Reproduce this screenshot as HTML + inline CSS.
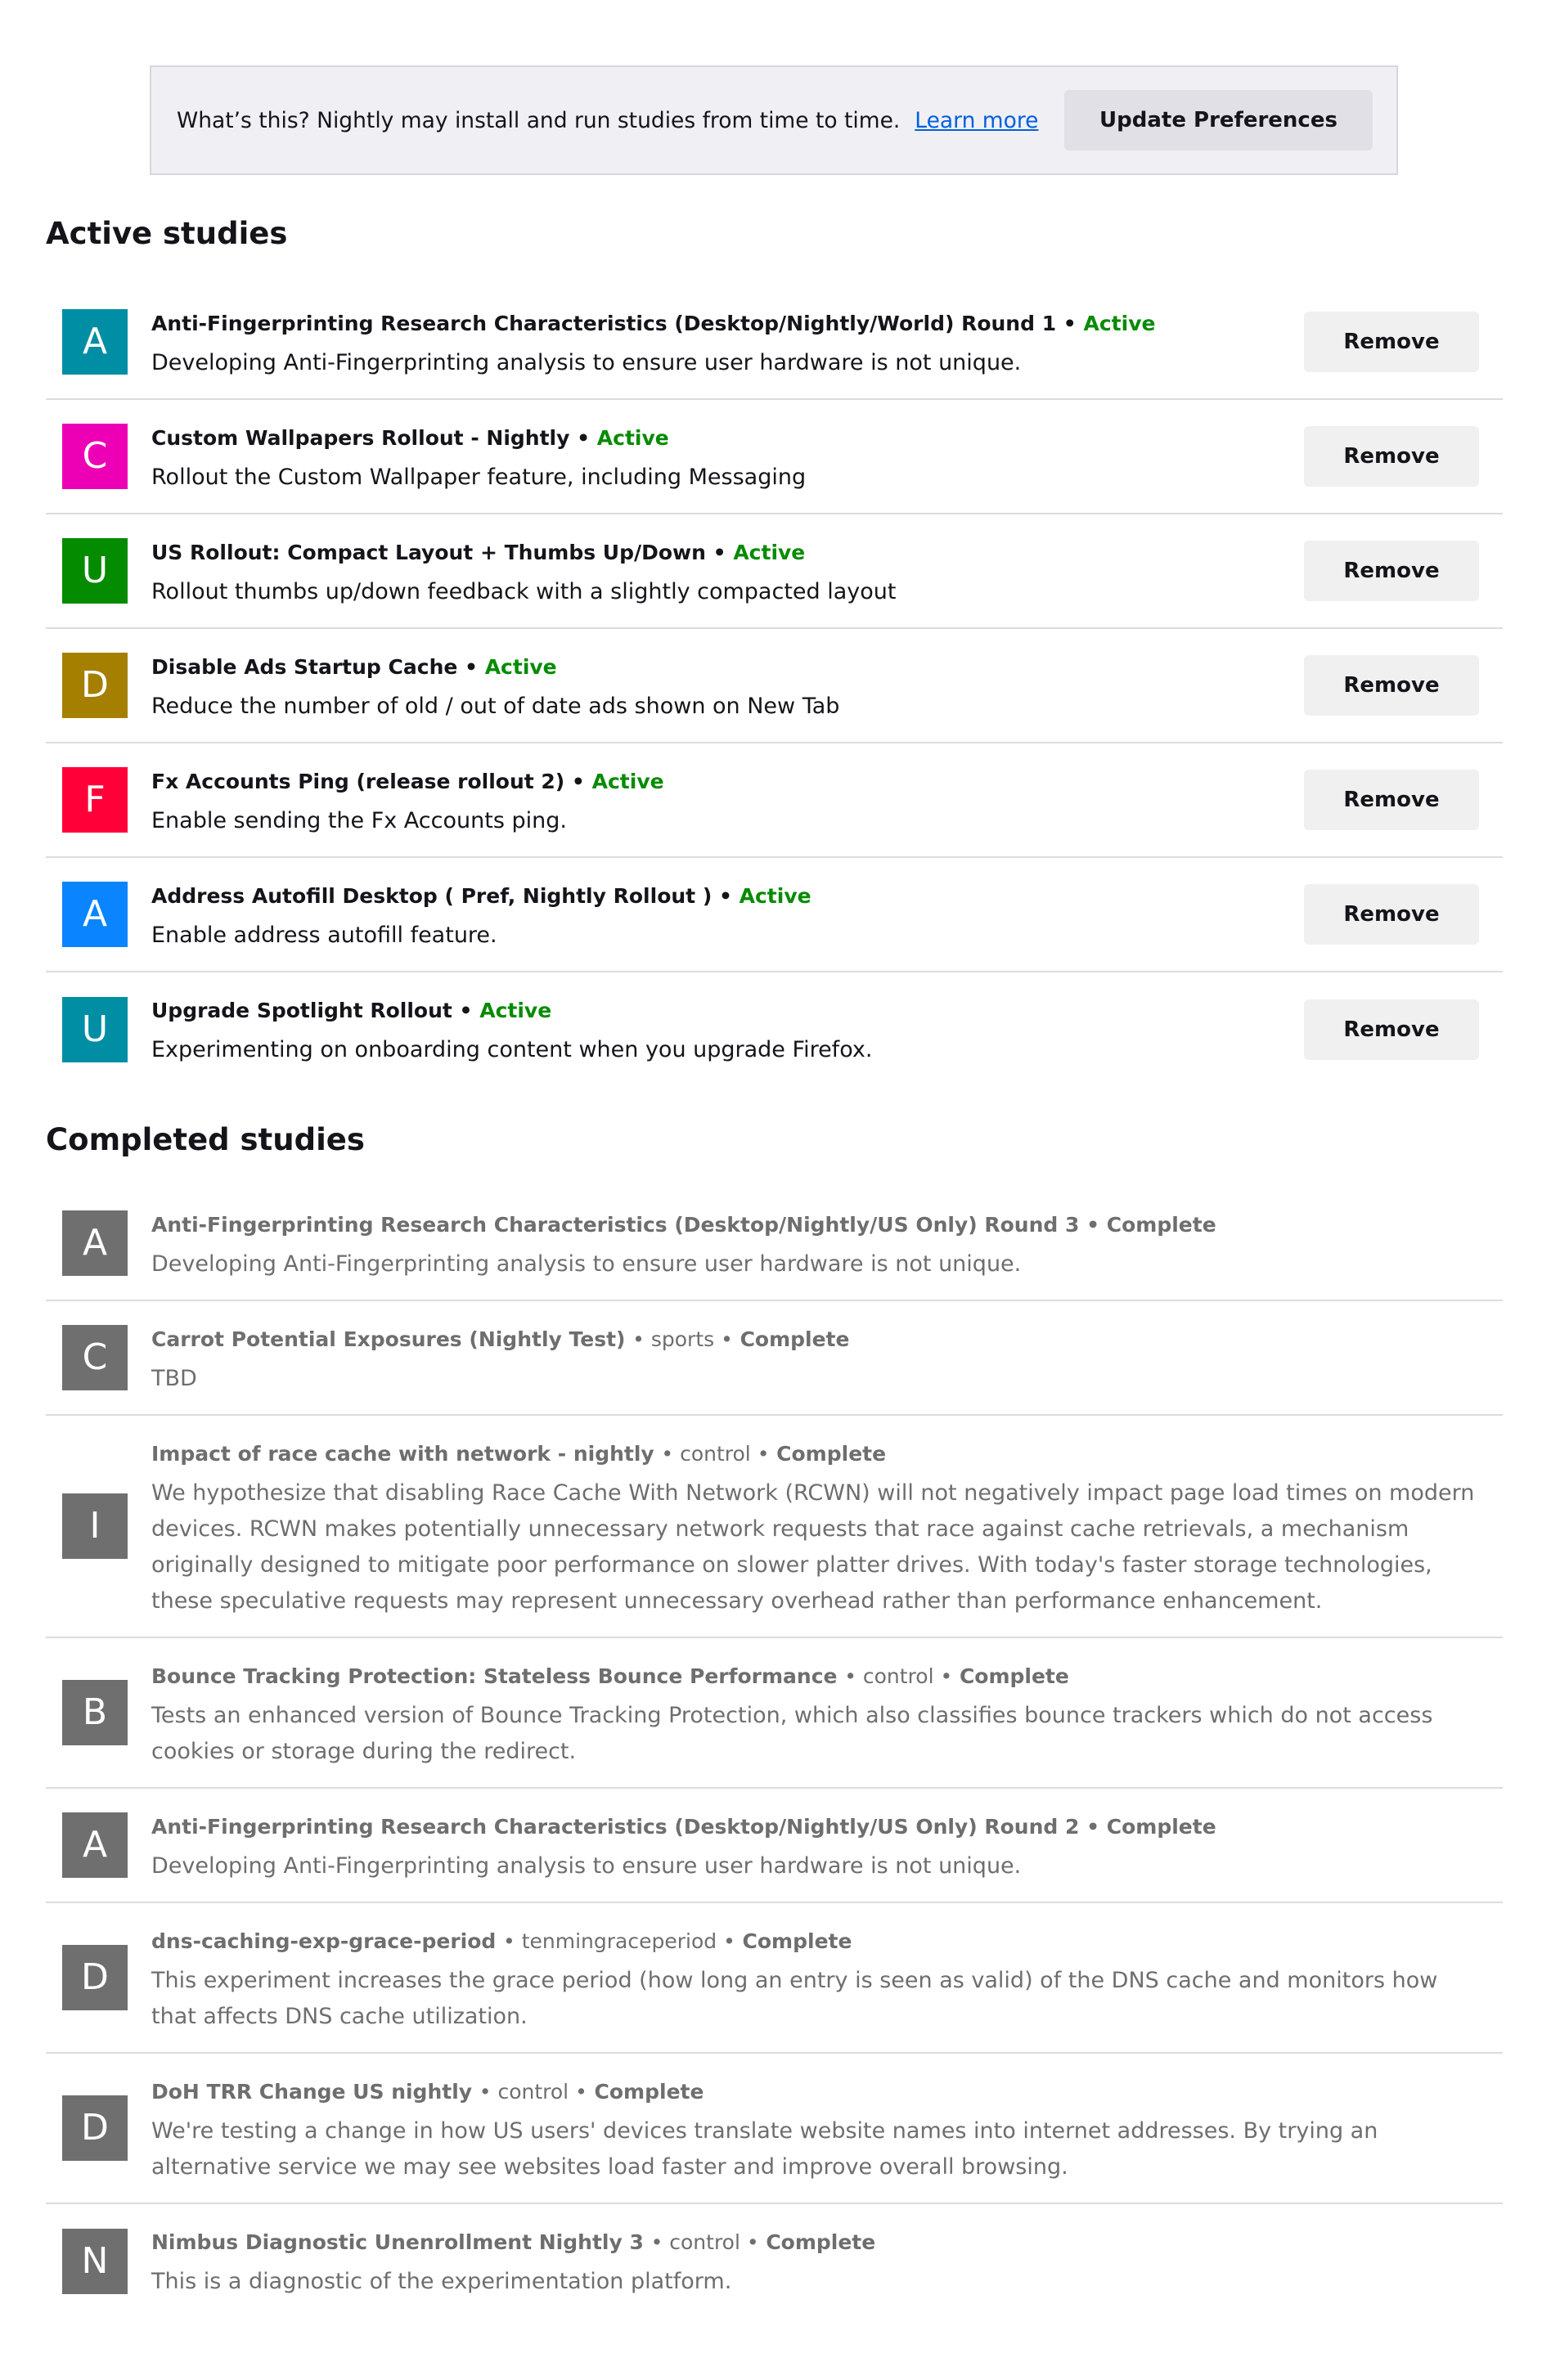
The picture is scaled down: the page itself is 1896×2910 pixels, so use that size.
<!DOCTYPE html>
<html><head><meta charset="utf-8"><style>
*{margin:0;padding:0;box-sizing:border-box}
body{width:1896px;height:2910px;background:#fff;font-family:"DejaVu Sans","Liberation Sans",sans-serif;color:#15141a;position:relative;overflow:hidden}
.banner{position:absolute;left:183px;top:80px;width:1526px;height:134px;background:#f0f0f4;border:2px solid #d6d6dc;}
.banner .t{position:absolute;left:31px;top:50px;font-size:26.5px;white-space:nowrap}
.banner a{color:#0060df;text-decoration:underline;margin-left:18px}
.banner .b{position:absolute;left:1116px;top:28px;width:377px;height:74px;background:#e0e0e6;border-radius:6px;font-size:26px;font-weight:bold;text-align:center;line-height:74px}
h2{position:absolute;left:56px;font-size:37px;font-weight:bold}
.list{position:absolute;left:56px;width:1781px}
.row{position:relative;padding:21px 0 21px 129px;border-bottom:2px solid #dcdce0;min-height:139px}
.row:last-child{border-bottom:none}
.ic{position:absolute;left:20px;top:50%;margin-top:-40px;width:80px;height:80px;color:#fff;font-size:44px;text-align:center;line-height:80px}
.ti{font-size:25px;font-weight:bold;line-height:52px;white-space:nowrap}
.ti .s{color:#058b00}
.de{font-size:27px;line-height:44px;padding-right:30px}
.rm{position:absolute;left:1538px;top:50%;margin-top:-37px;width:214px;height:74px;background:#f0f0f0;border-radius:6px;font-size:26px;font-weight:bold;text-align:center;line-height:74px}
.done .row{color:#6e6e6e}
.done .ic{background:#6f6f6f}
.done .n{font-weight:normal}
</style></head><body>
<div class="banner"><div class="t">What’s this? Nightly may install and run studies from time to time.<a>Learn more</a></div><div class="b">Update Preferences</div></div>
<h2 style="top:264px">Active studies</h2>
<div class="list" style="top:349px">
<div class="row"><div class="ic" style="background:#008ea4">A</div><div class="ti">Anti-Fingerprinting Research Characteristics (Desktop/Nightly/World) Round 1 • <span class="s">Active</span></div><div class="de">Developing Anti-Fingerprinting analysis to ensure user hardware is not unique.</div><div class="rm">Remove</div></div>
<div class="row"><div class="ic" style="background:#ed00b5">C</div><div class="ti">Custom Wallpapers Rollout - Nightly • <span class="s">Active</span></div><div class="de">Rollout the Custom Wallpaper feature, including Messaging</div><div class="rm">Remove</div></div>
<div class="row"><div class="ic" style="background:#058b00">U</div><div class="ti">US Rollout: Compact Layout + Thumbs Up/Down • <span class="s">Active</span></div><div class="de">Rollout thumbs up/down feedback with a slightly compacted layout</div><div class="rm">Remove</div></div>
<div class="row"><div class="ic" style="background:#a47f00">D</div><div class="ti">Disable Ads Startup Cache • <span class="s">Active</span></div><div class="de">Reduce the number of old / out of date ads shown on New Tab</div><div class="rm">Remove</div></div>
<div class="row"><div class="ic" style="background:#ff0039">F</div><div class="ti">Fx Accounts Ping (release rollout 2) • <span class="s">Active</span></div><div class="de">Enable sending the Fx Accounts ping.</div><div class="rm">Remove</div></div>
<div class="row"><div class="ic" style="background:#0a84ff">A</div><div class="ti">Address Autofill Desktop ( Pref, Nightly Rollout ) • <span class="s">Active</span></div><div class="de">Enable address autofill feature.</div><div class="rm">Remove</div></div>
<div class="row"><div class="ic" style="background:#008ea4">U</div><div class="ti">Upgrade Spotlight Rollout • <span class="s">Active</span></div><div class="de">Experimenting on onboarding content when you upgrade Firefox.</div><div class="rm">Remove</div></div>
</div>
<h2 style="top:1372px">Completed studies</h2>
<div class="list done" style="top:1451px">
<div class="row"><div class="ic">A</div><div class="ti">Anti-Fingerprinting Research Characteristics (Desktop/Nightly/US Only) Round 3 • Complete</div><div class="de">Developing Anti-Fingerprinting analysis to ensure user hardware is not unique.</div></div>
<div class="row"><div class="ic">C</div><div class="ti">Carrot Potential Exposures (Nightly Test) <span class="n">• sports •</span> Complete</div><div class="de">TBD</div></div>
<div class="row"><div class="ic">I</div><div class="ti">Impact of race cache with network - nightly <span class="n">• control •</span> Complete</div><div class="de">We hypothesize that disabling Race Cache With Network (RCWN) will not negatively impact page load times on modern devices. RCWN makes potentially unnecessary network requests that race against cache retrievals, a mechanism originally designed to mitigate poor performance on slower platter drives. With today's faster storage technologies, these speculative requests may represent unnecessary overhead rather than performance enhancement.</div></div>
<div class="row"><div class="ic">B</div><div class="ti">Bounce Tracking Protection: Stateless Bounce Performance <span class="n">• control •</span> Complete</div><div class="de">Tests an enhanced version of Bounce Tracking Protection, which also classifies bounce trackers which do not access cookies or storage during the redirect.</div></div>
<div class="row"><div class="ic">A</div><div class="ti">Anti-Fingerprinting Research Characteristics (Desktop/Nightly/US Only) Round 2 • Complete</div><div class="de">Developing Anti-Fingerprinting analysis to ensure user hardware is not unique.</div></div>
<div class="row"><div class="ic">D</div><div class="ti">dns-caching-exp-grace-period <span class="n">• tenmingraceperiod •</span> Complete</div><div class="de">This experiment increases the grace period (how long an entry is seen as valid) of the DNS cache and monitors how that affects DNS cache utilization.</div></div>
<div class="row"><div class="ic">D</div><div class="ti">DoH TRR Change US nightly <span class="n">• control •</span> Complete</div><div class="de">We're testing a change in how US users' devices translate website names into internet addresses. By trying an alternative service we may see websites load faster and improve overall browsing.</div></div>
<div class="row"><div class="ic">N</div><div class="ti">Nimbus Diagnostic Unenrollment Nightly 3 <span class="n">• control •</span> Complete</div><div class="de">This is a diagnostic of the experimentation platform.</div></div>
</div>
</body></html>
